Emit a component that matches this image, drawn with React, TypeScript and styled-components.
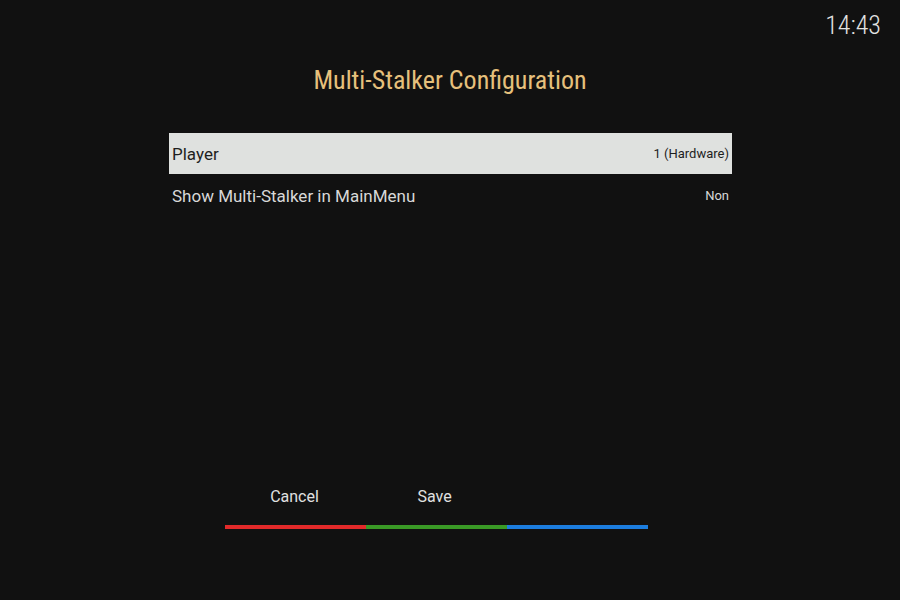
import React from 'react';
import styled, { createGlobalStyle } from 'styled-components';

interface SettingItem {
  label: string;
  value: string;
}

const settings: SettingItem[] = [
  { label: 'Player', value: '1 (Hardware)' },
  { label: 'Show Multi-Stalker in MainMenu', value: 'Non' },
];

const GlobalStyle = createGlobalStyle`
  html, body {
    margin: 0;
    padding: 0;
    background: #111111;
  }
  body {
    font-family: 'Roboto', 'Noto Sans', sans-serif;
  }
`;

const Screen = styled.div`
  width: 900px;
  height: 600px;
  background: #111111;
  position: relative;
  display: flex;
  flex-direction: column;
  align-items: center;
  overflow: hidden;
`;

const Clock = styled.div`
  position: absolute;
  top: 10px;
  right: 19px;
  font-size: 26px;
  font-weight: 300;
  font-stretch: 87.5%;
  color: #e2e2e2;
`;

const Title = styled.h1`
  margin: 62px 0 0 0;
  font-size: 26px;
  font-weight: 400;
  font-stretch: 87.5%;
  line-height: 36px;
  color: #e6c07c;
`;

const List = styled.div`
  margin-top: 35px;
  width: 563px;
  margin-left: 1px;
  display: flex;
  flex-direction: column;
  gap: 1px;
`;

const Row = styled.div<{ selected: boolean }>`
  height: 41px;
  display: flex;
  align-items: center;
  justify-content: space-between;
  padding: 0 3px;
  background: ${(p) => (p.selected ? '#dfe1df' : 'transparent')};
  color: ${(p) => (p.selected ? '#1e1e1e' : '#d8d8d8')};
`;

const Label = styled.span`
  font-size: 17px;
`;

const Value = styled.span`
  font-size: 13px;
`;

const Footer = styled.div`
  margin-top: auto;
  margin-bottom: 71px;
  margin-right: 28px;
  display: flex;
  flex-direction: column;
`;

const ButtonRow = styled.div`
  display: flex;
`;

const ButtonLabel = styled.div`
  width: 140px;
  text-align: center;
  font-size: 16px;
  line-height: 24px;
  color: #e0e0e0;
`;

const ColorBar = styled.div`
  margin-top: 16px;
  display: flex;
`;

const Segment = styled.div<{ color: string }>`
  width: 141px;
  height: 4px;
  background: ${(p) => p.color};
`;

const App: React.FC = () => {
  return (
    <Screen>
      <GlobalStyle />
      <Clock>14:43</Clock>
      <Title>Multi-Stalker Configuration</Title>
      <List>
        {settings.map((item, i) => (
          <Row key={item.label} selected={i === 0}>
            <Label>{item.label}</Label>
            <Value>{item.value}</Value>
          </Row>
        ))}
      </List>
      <Footer>
        <ButtonRow>
          <ButtonLabel>Cancel</ButtonLabel>
          <ButtonLabel>Save</ButtonLabel>
        </ButtonRow>
        <ColorBar>
          <Segment color="#e22a2a" />
          <Segment color="#3a9a26" />
          <Segment color="#1c7ddf" />
        </ColorBar>
      </Footer>
    </Screen>
  );
};

export default App;
